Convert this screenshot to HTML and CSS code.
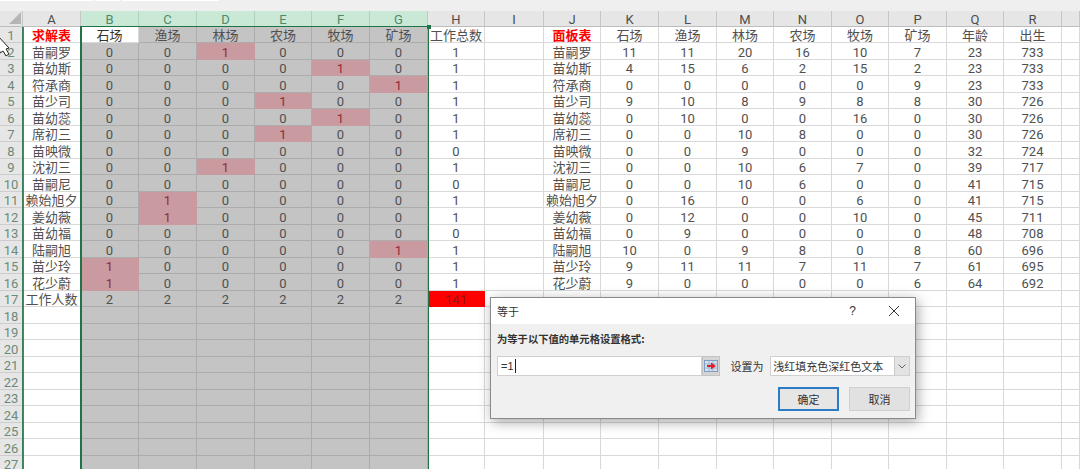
FILE: index.html
```html
<!DOCTYPE html>
<html lang="zh-CN">
<head>
<meta charset="utf-8">
<title>等于</title>
<link rel="stylesheet" href="styles.css">
</head>
<body>
<div class="ribbon"><span class="box b1"></span><span class="box b2"></span><span class="box b3"></span></div>
<table class="sheet">
<colgroup>
<col class="w23"><col class="w58"><col class="w58"><col class="w58"><col class="w58"><col class="w57"><col class="w58"><col class="w58"><col class="w57"><col class="w59"><col class="w57"><col class="w58"><col class="w58"><col class="w57"><col class="w58"><col class="w57"><col class="w58"><col class="w57"><col class="w58"><col class="w18">
</colgroup>
<thead>
<tr><th class="corner"><svg class="tri" viewBox="0 0 12 12"><path d="M12 0V12H0Z"/></svg><th>A<th class="sel">B<th class="sel">C<th class="sel">D<th class="sel">E<th class="sel">F<th class="sel">G<th>H<th>I<th>J<th>K<th>L<th>M<th>N<th>O<th>P<th>Q<th>R<th></tr>
</thead>
<tbody>
<tr><th>1<td class="t">求解表<td class="active">石场<td>渔场<td>林场<td>农场<td>牧场<td>矿场<td>工作总数<td><td class="t">面板表<td>石场<td>渔场<td>林场<td>农场<td>牧场<td>矿场<td>年龄<td>出生<td></tr>
<tr><th>2<td>苗嗣罗<td>0<td>0<td class="p">1<td>0<td>0<td>0<td>1<td><td>苗嗣罗<td>11<td>11<td>20<td>16<td>10<td>7<td>23<td>733<td></tr>
<tr><th>3<td>苗幼斯<td>0<td>0<td>0<td>0<td class="p">1<td>0<td>1<td><td>苗幼斯<td>4<td>15<td>6<td>2<td>15<td>2<td>23<td>733<td></tr>
<tr><th>4<td>符承商<td>0<td>0<td>0<td>0<td>0<td class="p">1<td>1<td><td>符承商<td>0<td>0<td>0<td>0<td>0<td>9<td>23<td>733<td></tr>
<tr><th>5<td>苗少司<td>0<td>0<td>0<td class="p">1<td>0<td>0<td>1<td><td>苗少司<td>9<td>10<td>8<td>9<td>8<td>8<td>30<td>726<td></tr>
<tr><th>6<td>苗幼蕊<td>0<td>0<td>0<td>0<td class="p">1<td>0<td>1<td><td>苗幼蕊<td>0<td>10<td>0<td>0<td>16<td>0<td>30<td>726<td></tr>
<tr><th>7<td>席初三<td>0<td>0<td>0<td class="p">1<td>0<td>0<td>1<td><td>席初三<td>0<td>0<td>10<td>8<td>0<td>0<td>30<td>726<td></tr>
<tr><th>8<td>苗映微<td>0<td>0<td>0<td>0<td>0<td>0<td>0<td><td>苗映微<td>0<td>0<td>9<td>0<td>0<td>0<td>32<td>724<td></tr>
<tr><th>9<td>沈初三<td>0<td>0<td class="p">1<td>0<td>0<td>0<td>1<td><td>沈初三<td>0<td>0<td>10<td>6<td>7<td>0<td>39<td>717<td></tr>
<tr><th>10<td>苗嗣尼<td>0<td>0<td>0<td>0<td>0<td>0<td>0<td><td>苗嗣尼<td>0<td>0<td>10<td>6<td>0<td>0<td>41<td>715<td></tr>
<tr><th>11<td>赖始旭夕<td>0<td class="p">1<td>0<td>0<td>0<td>0<td>1<td><td>赖始旭夕<td>0<td>16<td>0<td>0<td>6<td>0<td>41<td>715<td></tr>
<tr><th>12<td>姜幼薇<td>0<td class="p">1<td>0<td>0<td>0<td>0<td>1<td><td>姜幼薇<td>0<td>12<td>0<td>0<td>10<td>0<td>45<td>711<td></tr>
<tr><th>13<td>苗幼福<td>0<td>0<td>0<td>0<td>0<td>0<td>0<td><td>苗幼福<td>0<td>9<td>0<td>0<td>0<td>0<td>48<td>708<td></tr>
<tr><th>14<td>陆嗣旭<td>0<td>0<td>0<td>0<td>0<td class="p">1<td>1<td><td>陆嗣旭<td>10<td>0<td>9<td>8<td>0<td>8<td>60<td>696<td></tr>
<tr><th>15<td>苗少玲<td class="p">1<td>0<td>0<td>0<td>0<td>0<td>1<td><td>苗少玲<td>9<td>11<td>11<td>7<td>11<td>7<td>61<td>695<td></tr>
<tr><th>16<td>花少蔚<td class="p">1<td>0<td>0<td>0<td>0<td>0<td>1<td><td>花少蔚<td>9<td>0<td>0<td>0<td>0<td>6<td>64<td>692<td></tr>
<tr><th>17<td>工作人数<td>2<td>2<td>2<td>2<td>2<td>2<td class="total">141<td><td><td><td><td><td><td><td><td><td><td></tr>
<tr><th>18<td><td><td><td><td><td><td><td><td><td><td><td><td><td><td><td><td><td><td><td></tr>
<tr><th>19<td><td><td><td><td><td><td><td><td><td><td><td><td><td><td><td><td><td><td><td></tr>
<tr><th>20<td><td><td><td><td><td><td><td><td><td><td><td><td><td><td><td><td><td><td></tr>
<tr><th>21<td><td><td><td><td><td><td><td><td><td><td><td><td><td><td><td><td><td><td></tr>
<tr><th>22<td><td><td><td><td><td><td><td><td><td><td><td><td><td><td><td><td><td><td></tr>
<tr><th>23<td><td><td><td><td><td><td><td><td><td><td><td><td><td><td><td><td><td><td></tr>
<tr><th>24<td><td><td><td><td><td><td><td><td><td><td><td><td><td><td><td><td><td><td></tr>
<tr><th>25<td><td><td><td><td><td><td><td><td><td><td><td><td><td><td><td><td><td><td></tr>
<tr><th>26<td><td><td><td><td><td><td><td><td><td><td><td><td><td><td><td><td><td><td></tr>
<tr><th>27<td><td><td><td><td><td><td><td><td><td><td><td><td><td><td><td><td><td><td></tr>
</tbody>
</table>

<div class="selection"><span class="handle"></span></div>
<div class="a-edge"></div>

<svg class="cursor" viewBox="0 0 12 22"><path d="M-3 -2 L9 11 L6 12 L9 17 L6 19 L3 14 L0 16 Z"/></svg>

<section class="dialog">
  <header class="dlg-title">
    <span class="dlg-name">等于</span>
    <span class="dlg-actions">
      <span class="help">?</span>
      <svg class="close" viewBox="0 0 10 10"><path d="M0 0L10 10M10 0L0 10"/></svg>
    </span>
  </header>
  <div class="dlg-body">
    <div class="dlg-label">为等于以下值的单元格设置格式:</div>
    <div class="dlg-row">
      <div class="input"><span>=1</span><i class="caret"></i></div>
      <div class="ref">
        <svg viewBox="0 0 16 18"><rect x="1.5" y="3.5" width="13" height="11" fill="#d3e0f0" stroke="#7f9cc0"/><path d="M1.5 7H14.5M1.5 11H14.5M6 3.5V14.5M10 3.5V14.5" stroke="#9db4d0"/><path d="M4 8H8V5.5L13 9L8 12.5V10H4Z" fill="#e0202a"/></svg>
      </div>
      <span class="set-label">设置为</span>
      <div class="select">
        <span class="select-text">浅红填充色深红色文本</span>
        <span class="drop"><svg viewBox="0 0 8 5"><path d="M0.5 0.5L4 4L7.5 0.5"/></svg></span>
      </div>
    </div>
    <div class="dlg-buttons">
      <button class="btn primary" type="button">确定</button>
      <button class="btn" type="button">取消</button>
    </div>
  </div>
</section>
</body>
</html>
```
FILE: styles.css
```css
* { box-sizing: border-box; }
html, body { margin: 0; height: 469px; overflow: hidden; background: #fff; }
body { position: relative; font-family: Roboto, "Noto Sans CJK SC", sans-serif; font-weight: 400; color: #505050; }

.ribbon { height: 11px; background: #efefef; display: flex; gap: 2px; align-items: flex-start; }
.box { height: 1px; background: #fff; display: block; }
.b1 { width: 93px; } .b2 { width: 25px; } .b3 { width: 97px; }

.sheet { border-collapse: separate; border-spacing: 0; table-layout: fixed; width: 1080px; font-size: 13px; line-height: 13px; }
.w18 { width: 18px; } .w23 { width: 23px; } .w57 { width: 57px; } .w58 { width: 58px; } .w59 { width: 59px; }
.sheet tr { height: 16px; }
.sheet tbody tr:nth-child(even) { height: 17px; }
.sheet th, .sheet td { padding: 2px 0 0; text-align: center; font-weight: 400; white-space: nowrap; overflow: visible; border-right: 1px solid #d9d9d9; border-bottom: 1px solid #d9d9d9; }

.sheet thead th { background: #e6e6e6; border-right-color: #c6c6c6; border-bottom-color: #bdbdbd; color: #4d4d4d; font-size: 13px; }
.sheet thead th.sel { background: #c9e8d6; border-right-color: #aed3bd; border-bottom-color: #217346; color: #4f8a68; }
.sheet thead th.corner { position: relative; }
.tri { position: absolute; right: 1px; bottom: 2px; width: 12px; height: 12px; fill: #b5b5b5; }

.sheet tbody th { background: #e6e6e6; color: #6d8a79; border-right-color: #c6c6c6; border-bottom-color: #cdcdcd; font-size: 13px; }
.sheet td:nth-child(n+3):nth-child(-n+8) { background: #c4c4c4; border-color: #acacac; }
.sheet td.active:nth-child(n) { background: #fff; border-color: #d9d9d9; color: #333; }
.sheet td.p:nth-child(n) { background: #c99a9f; border-color: #c99a9f; color: #8f2c38; }
.sheet td.t { color: #ff0000; font-weight: 700; }
.sheet td.total { background: #ff0000; border-color: #ff0000; color: #8a1a1a; }

.selection { position: absolute; left: 80px; top: 26px; width: 349px; height: 450px; border: 1px solid #217346; border-left-width: 2px; pointer-events: none; }
.handle { position: absolute; right: -3px; top: -2px; width: 4px; height: 4px; background: #217346; }
.a-edge { position: absolute; left: 22px; top: 27px; width: 2px; height: 442px; background: #217346; opacity: .85; }

.cursor { position: absolute; left: 0; top: 37px; width: 12px; height: 22px; overflow: visible; fill: #fff; stroke: #222; stroke-width: 1; }

.dialog { position: absolute; left: 490px; top: 297px; width: 426px; height: 122px; background: #f0f0f0; border: 1px solid #8a8a8a; box-shadow: 2px 3px 12px rgba(0,0,0,.35); display: flex; flex-direction: column; font-family: "Noto Sans CJK SC", sans-serif; font-weight: 400; font-size: 11px; line-height: 14px; color: #333; }
.dlg-title { height: 26px; background: #fff; display: flex; align-items: center; justify-content: space-between; padding: 0 16px 0 6px; }
.dlg-actions { display: flex; align-items: center; gap: 33px; }
.help { font-family: "Liberation Sans", sans-serif; font-size: 12px; }
.close { width: 10px; height: 10px; stroke: #333; stroke-width: 1; fill: none; display: block; }
.dlg-body { flex: 1; padding: 8px 5px 0 6px; display: flex; flex-direction: column; }
.dlg-label { font-weight: 700; font-size: 10.3px; line-height: 14px; }
.dlg-row { display: flex; align-items: center; margin-top: 10px; height: 20px; }
.input { width: 206px; height: 20px; background: #fff; border: 1px solid #d0d0d0; display: flex; align-items: center; padding-left: 3px; font-family: "Liberation Sans", sans-serif; font-size: 11px; }
.caret { display: block; width: 1px; height: 14px; background: #222; margin-left: 1px; }
.ref { width: 18px; height: 20px; background: #d5d5d5; border: 1px solid #c4c4c4; }
.ref svg { display: block; width: 16px; height: 18px; }
.set-label { margin-left: 10px; width: 40px; }
.select { width: 140px; height: 20px; background: #fff; border: 1px solid #d0d0d0; display: flex; align-items: stretch; justify-content: space-between; }
.select-text { padding-left: 2px; line-height: 18px; }
.drop { width: 15px; background: #e3e3e3; border-left: 1px solid #c8c8c8; display: flex; align-items: center; justify-content: center; }
.drop svg { width: 8px; height: 5px; stroke: #666; fill: none; }
.dlg-buttons { display: flex; justify-content: flex-end; gap: 10px; margin-top: 11px; }
.btn { width: 61px; height: 24px; background: #e1e1e1; border: 1px solid #d0d0d0; font: inherit; color: #333; padding: 0; }
.btn.primary { border: 2px solid #2b7cc6; background: #e6e6e6; }
```
